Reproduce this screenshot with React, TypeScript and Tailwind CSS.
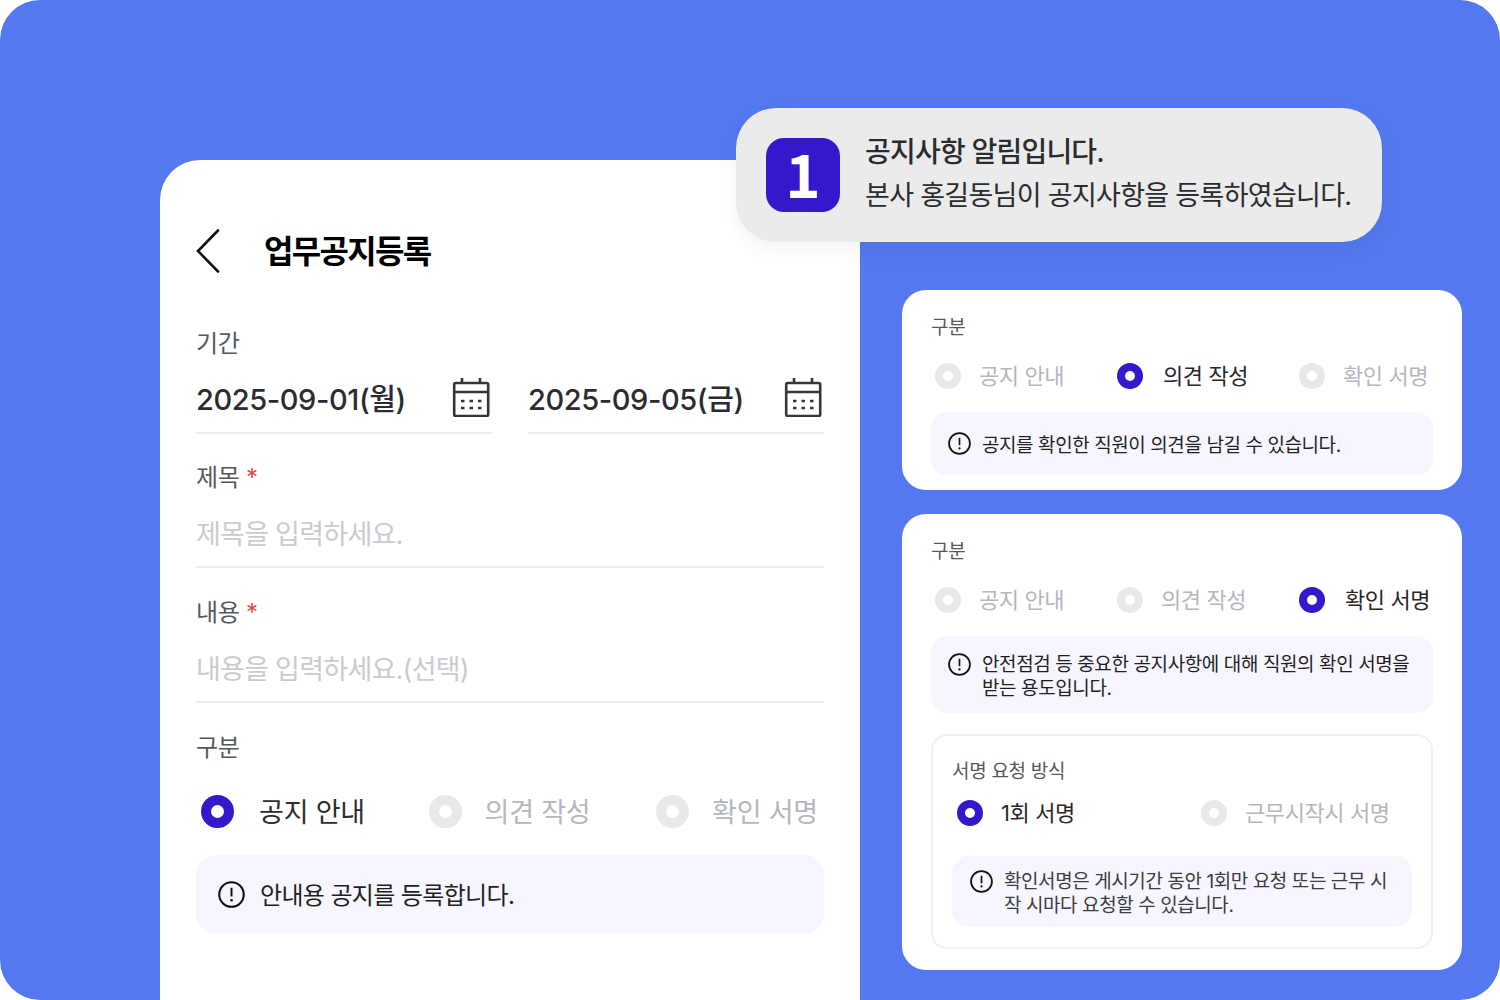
const InfoIcon = ({ className }: { className: string }) => (
  <svg viewBox="0 0 26 26" fill="none" className={className}>
    <circle cx="13" cy="13" r="11.8" stroke="#111" strokeWidth="2" />
    <path d="M13 6.5v8.5" stroke="#111" strokeWidth="1.9" />
    <circle cx="13" cy="18.6" r="1.25" fill="#111" />
  </svg>
)

const CalendarIcon = () => (
  <svg width="38" height="40" viewBox="0 0 38 40" fill="none" stroke="#33363b" strokeWidth="2.6" className="-mt-[1px]">
    <rect x="2.2" y="6" width="34" height="33" rx="1.5" />
    <path d="M2 15h34M10 1v5M28 1v5" />
    <path d="M9 24h3.5M17.5 24h3.5M26 24h3.5M9 31h3.5M17.5 31h3.5M26 31h3.5" strokeWidth="2.6" />
  </svg>
)

const Radio = ({ on, size }: { on: boolean; size: "lg" | "sm" }) => (
  <span
    className={`block rounded-full bg-white shrink-0 ${size === "lg" ? "w-[33px] h-[33px] border-[10px]" : "w-[26px] h-[26px] border-[8px]"} ${on ? "border-[#3418cc]" : "border-[#e9e9ea]"}`}
  />
)

const RadioItem = ({ label, on, width, gap }: { label: string; on?: boolean; width: string; gap?: string }) => (
  <div className={`flex items-center shrink-0 ${gap ?? (on ? "gap-[20px]" : "gap-[18px]")} ${width}`}>
    <Radio on={!!on} size="sm" />
    <span className={`text-[22px] leading-[30px] tracking-[-0.4px] ${on ? "text-[#26282c]" : "text-[#b4b7bc]"}`}>{label}</span>
  </div>
)

const Field = ({ label, hint }: { label: string; hint: string }) => (
  <div className="h-[135px] pt-[30px]">
    <div className="text-[24px] leading-[30px] text-[#55585d] tracking-[-0.3px]">
      {label} <span className="text-[#e5484d]">*</span>
    </div>
    <div className="mt-[23px] h-[52px] border-b-2 border-[#e9ebee] text-[27px] leading-[38px] tracking-[-0.75px] text-[#c9cbcf]">{hint}</div>
  </div>
)

const DateField = ({ value }: { value: string }) => (
  <div className="flex-1 h-[56px] border-b-2 border-[#e9ebee] flex items-start justify-between pr-[2px]">
    <span className="text-[29px] leading-[44px] font-medium text-[#2a2c30] tracking-[-0.4px]">{value}</span>
    <CalendarIcon />
  </div>
)

export default function App() {
  return (
    <div
      className="relative w-[1500px] h-[1000px] bg-white overflow-hidden"
      style={{ fontFamily: "Inter, 'Noto Sans CJK KR', sans-serif" }}
    >
      <div className="flex w-full h-full rounded-[40px] bg-[#5478f0] overflow-hidden">
        <div className="ml-[160px] mt-[160px] w-[700px] h-[840px] bg-white rounded-tl-[40px] px-[36px] shrink-0">
          <div className="flex items-center h-[60px] mt-[61px]">
            <svg width="24" height="44" viewBox="0 0 24 44" fill="none" stroke="#111" strokeWidth="2.6" strokeLinecap="round">
              <path d="M22 1.5 2 22l20 20.5" />
            </svg>
            <h1 className="ml-[44px] mt-[1px] text-[32px] leading-[44px] font-bold text-black tracking-[-1.7px]">업무공지등록</h1>
          </div>
          <div className="mt-[46px] text-[24px] leading-[34px] text-[#55585d] tracking-[-0.3px]">기간</div>
          <div className="mt-[17px] -mb-[1px] flex gap-[36px]">
            <DateField value="2025-09-01(월)" />
            <DateField value="2025-09-05(금)" />
          </div>
          <Field label="제목" hint="제목을 입력하세요." />
          <Field label="내용" hint="내용을 입력하세요.(선택)" />
          <div className="mt-[30px] text-[24px] leading-[30px] text-[#55585d] tracking-[-0.3px]">구분</div>
          <div className="mt-[28px] flex pl-[5px]">
            {[
              { t: "공지 안내", on: true },
              { t: "의견 작성", on: false },
              { t: "확인 서명", on: false },
            ].map((r) => (
              <div key={r.t} className={`flex items-center shrink-0 w-[227.5px] ${r.on ? "gap-[25px]" : "gap-[23px]"}`}>
                <Radio on={r.on} size="lg" />
                <span className={`pt-[4px] text-[27px] leading-[36px] tracking-[-0.2px] ${r.on ? "text-[#2a2c30]" : "text-[#b4b7bc]"}`}>{r.t}</span>
              </div>
            ))}
          </div>
          <div className="mt-[24px] h-[79px] rounded-[20px] bg-[#f7f6fe] flex items-center pl-[22px] gap-[15px]">
            <InfoIcon className="w-[27px] h-[27px]" />
            <span className="pt-[2px] text-[24px] leading-[36px] text-[#1d1f23] tracking-[-0.65px]">안내용 공지를 등록합니다.</span>
          </div>
        </div>

        <div className="ml-[42px] mt-[290px] w-[560px] shrink-0 flex flex-col gap-[24px]">
          <div className="h-[200px] rounded-[24px] bg-white px-[29px] pt-[25px]">
            <div className="text-[19px] leading-[26px] text-[#55585d] tracking-[-0.3px]">구분</div>
            <div className="mt-[20px] flex pl-[4px]">
              <RadioItem label="공지 안내" width="w-[182px]" />
              <RadioItem label="의견 작성" on width="w-[182px]" />
              <RadioItem label="확인 서명" width="w-[140px]" />
            </div>
            <div className="mt-[21px] h-[63px] rounded-[16px] bg-[#f7f6fe] flex items-center pl-[17px] gap-[11px]">
              <InfoIcon className="w-[23px] h-[23px]" />
              <span className="pt-[4px] text-[19px] leading-[26px] text-[#1d1f23] tracking-[-0.42px]">공지를 확인한 직원이 의견을 남길 수 있습니다.</span>
            </div>
          </div>

          <div className="h-[456px] rounded-[24px] bg-white px-[29px] pt-[25px]">
            <div className="text-[19px] leading-[26px] text-[#55585d] tracking-[-0.3px]">구분</div>
            <div className="mt-[20px] flex pl-[4px]">
              <RadioItem label="공지 안내" width="w-[182px]" />
              <RadioItem label="의견 작성" width="w-[182px]" />
              <RadioItem label="확인 서명" on width="w-[140px]" />
            </div>
            <div className="mt-[21px] h-[77px] rounded-[16px] bg-[#f7f6fe] flex pt-[17px] pl-[17px] gap-[11px]">
              <InfoIcon className="w-[23px] h-[23px] shrink-0" />
              <span className="text-[19px] leading-[24px] text-[#1d1f23] tracking-[-0.4px] w-[440px]">안전점검 등 중요한 공지사항에 대해 직원의 확인 서명을 받는 용도입니다.</span>
            </div>
            <div className="mt-[21px] h-[215px] rounded-[16px] border-2 border-[#f0f1f3] px-[19px] pt-[21px]">
              <div className="text-[19px] leading-[30px] text-[#55585d] tracking-[-0.3px]">서명 요청 방식</div>
              <div className="mt-[11px] flex pl-[5px]">
                <RadioItem label="1회 서명" on gap="gap-[18px]" width="w-[244px]" />
                <RadioItem label="근무시작시 서명" width="w-[200px]" />
              </div>
              <div className="mt-[28px] h-[71px] rounded-[16px] bg-[#f7f6fe] flex pt-[14px] pl-[18px] gap-[11px]">
                <InfoIcon className="w-[23px] h-[23px] shrink-0" />
                <span className="text-[19px] leading-[24px] text-[#3a3c40] tracking-[-0.42px] w-[400px]">확인서명은 게시기간 동안 1회만 요청 또는 근무 시작 시마다 요청할 수 있습니다.</span>
              </div>
            </div>
          </div>
        </div>
      </div>

      <div className="absolute left-[736px] top-[108px] w-[646px] h-[134px] rounded-[40px] bg-[#ebebeb] flex items-center pl-[30px] shadow-[0_8px_24px_rgba(0,0,0,0.05)]">
        <div
          className="w-[74px] h-[74px] rounded-[18px] bg-[#3418cc] flex items-center justify-center pb-[6px] text-white font-bold text-[60px] leading-none"
          style={{ fontFamily: "'Noto Sans CJK KR', sans-serif" }}
        >
          1
        </div>
        <div className="ml-[25px] -mt-[3px]">
          <div className="text-[28px] leading-[44px] font-medium text-[#2a2c30] tracking-[-0.8px]">공지사항 알림입니다.</div>
          <div className="text-[27px] leading-[44px] text-[#2a2c30] tracking-[-0.7px]">본사 홍길동님이 공지사항을 등록하였습니다.</div>
        </div>
      </div>
    </div>
  )
}
